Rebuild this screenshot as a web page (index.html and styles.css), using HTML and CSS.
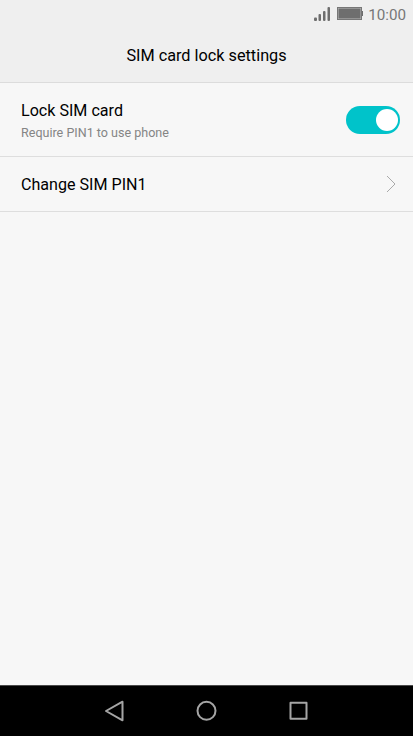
FILE: index.html
```html
<!DOCTYPE html>
<html lang="en">
<head>
    <meta charset="UTF-8">
    <meta name="viewport" content="width=device-width, initial-scale=1.0">
    <title>SIM card lock settings</title>
    <link rel="stylesheet" href="styles.css">
</head>
<body>
    <header>
        <!-- Status bar -->
        <div class="status-bar">
            <svg class="signal" width="17" height="14" viewBox="0 0 17 14">
                <rect x="1" y="10.500" width="3" height="3.500" rx="1"/>
                <rect x="5.500" y="7" width="2.500" height="7" rx="1"/>
                <rect x="10" y="4" width="2.500" height="10" rx="1"/>
                <rect x="14.500" y="0" width="2.500" height="14" rx="1"/>
            </svg>
            <svg class="battery" width="26" height="14" viewBox="0 0 26 14">
                <rect class="battery-frame" x=".5" y=".5" width="24" height="12"/>
                <path d="M1.500 1.500h22v10h-22zM25 4h1v5h-1z"/>
            </svg>
            <span class="clock">10:00</span>
        </div>
        <h1>SIM card lock settings</h1>
    </header>

    <main>
        <label class="row row-lock">
            <span class="text">
                <span class="title">Lock SIM card</span>
                <span class="summary">Require PIN1 to use phone</span>
            </span>
            <input type="checkbox" class="switch" checked>
        </label>
        <a class="row row-change">
            <span class="title">Change SIM PIN1</span>
            <svg class="chevron" width="10" height="18" viewBox="0 0 10 18">
                <path d="M1 1l8 8-8 8"/>
            </svg>
        </a>
    </main>

    <!-- Navigation keys -->
    <nav>
        <svg width="22" height="22" viewBox="0 0 22 22"><path d="M18.500 1.700v18.600L2 11z"/></svg>
        <svg width="22" height="22" viewBox="0 0 22 22"><circle cx="10.500" cy="10.800" r="9"/></svg>
        <svg width="22" height="22" viewBox="0 0 22 22"><rect x="2.500" y="2.700" width="16" height="16"/></svg>
    </nav>
</body>
</html>
```
FILE: styles.css
```css
* {
    box-sizing: border-box;
}
body {
    display: flex;
    flex-direction: column;
    height: 100vh;
    margin: 0;
    background-color: #f7f7f7;
    color: #000;
    font-family: Roboto, sans-serif;
}
header {
    height: 83px;
    background-color: #efefef;
    border-bottom: 1px solid #dcdcdc;
}
.status-bar {
    display: flex;
    align-items: center;
    justify-content: flex-end;
    height: 28px;
    padding-right: 7px;
    color: #777;
    fill: #6e6e6e;
}
.battery {
    margin: 0 5px 0 7px;
}
.battery-frame {
    fill: #bbb;
    stroke: #777;
}
.clock {
    padding-top: 2px;
    font-size: 15.2px;
}
h1 {
    margin: 0;
    font-size: 16.25px;
    font-weight: 400;
    line-height: 55px;
    text-align: center;
}
main {
    flex: 1;
}
.row {
    display: flex;
    align-items: center;
    justify-content: space-between;
    padding: 0 13px 0 21px;
    border-bottom: 1px solid #dedede;
}
.row-lock {
    height: 74px;
}
.row-change {
    height: 55px;
    padding-right: 17px;
}
.title {
    display: block;
    font-size: 16.1px;
    line-height: 22px;
}
.text {
    padding-top: 5px;
}
.row-change .title {
    padding-top: 2px;
}
.summary {
    display: block;
    color: #858585;
    font-size: 12.55px;
    line-height: 22px;
}
.switch {
    appearance: none;
    display: flex;
    justify-content: flex-end;
    width: 54px;
    height: 28px;
    margin: 0;
    padding: 3px 2px;
    border-radius: 14px;
    background-color: #00c3ca;
}
.switch::before {
    content: "";
    width: 22px;
    height: 22px;
    border-radius: 50%;
    background-color: #fff;
}
.chevron {
    fill: none;
    stroke: #aaa;
}
nav {
    display: flex;
    align-items: center;
    justify-content: center;
    gap: 70px;
    height: 51px;
    border-top: 1px solid #4a4a4a;
    background-color: #000;
    fill: none;
    stroke: #a5a5a5;
    stroke-width: 2;
    stroke-linejoin: round;
}
```
